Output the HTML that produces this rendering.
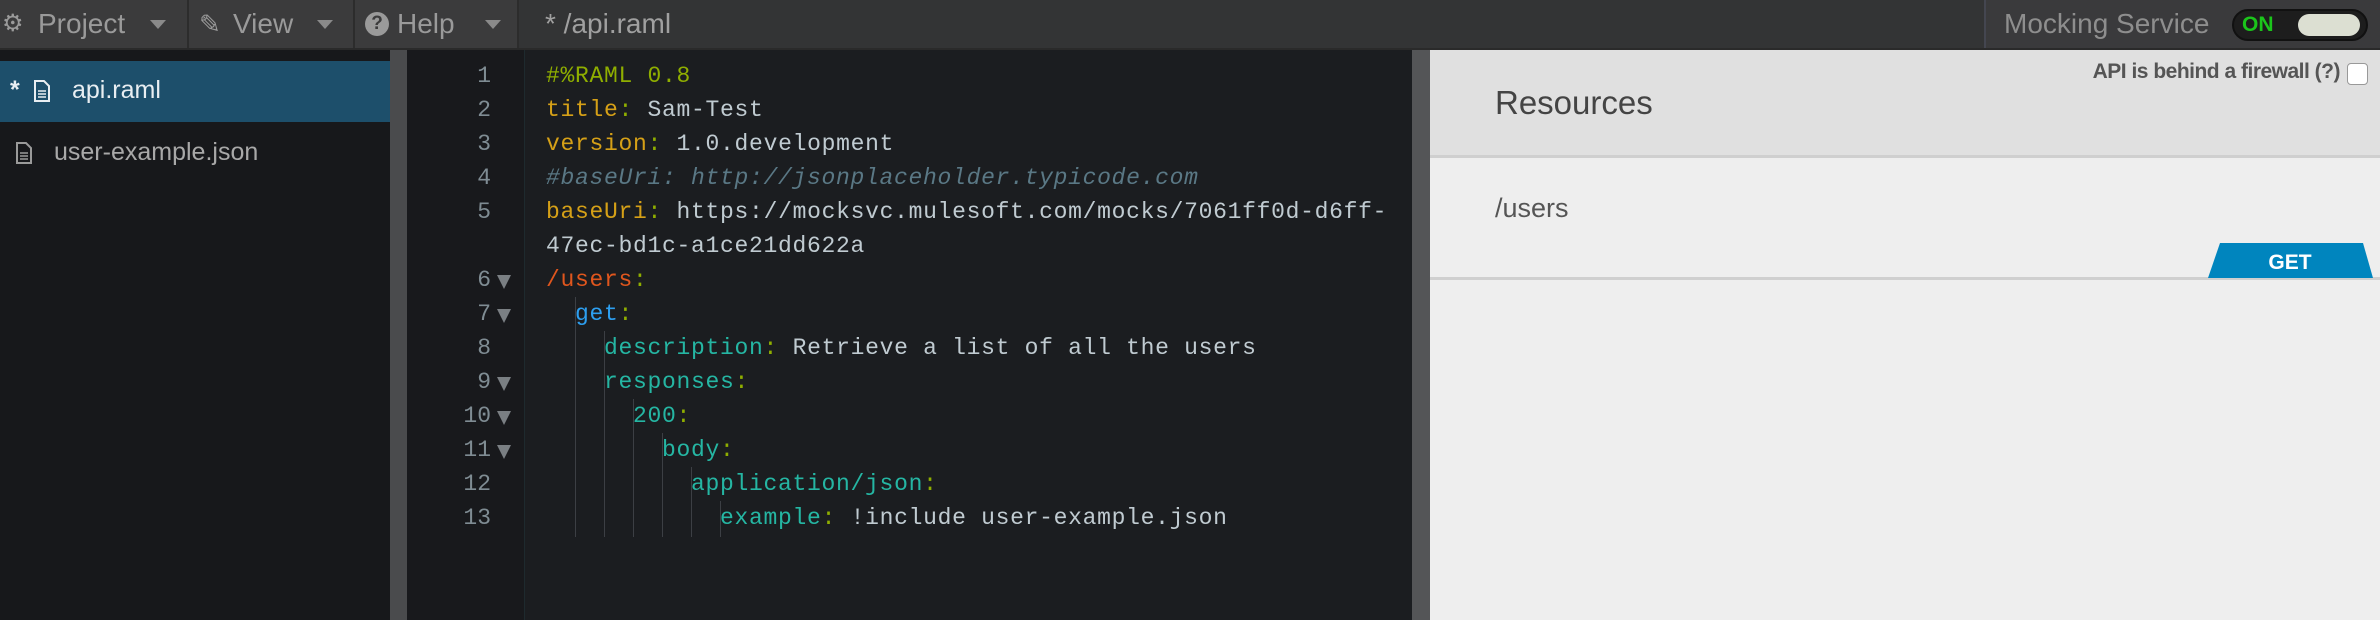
<!DOCTYPE html>
<html><head><meta charset="utf-8"><style>
*{margin:0;padding:0;box-sizing:border-box}
body{width:2380px;height:620px;overflow:hidden;background:#1b1c1f;font-family:"Liberation Sans",sans-serif;position:relative}
.top{position:absolute;left:0;top:0;width:2380px;height:50px;background:#333435;border-bottom:2px solid #2a2a2a}
.menu{position:absolute;top:0;height:48px;background:#3b3b3c;color:#9a9a9a;font-size:28px;line-height:48px;border-right:2px solid #2c2c2c}
.caret{position:absolute;top:20px;width:0;height:0;border-left:8px solid transparent;border-right:8px solid transparent;border-top:9px solid #8a8a8a}
.side{position:absolute;left:0;top:50px;width:390px;height:570px;background:#17181b}
.sel{position:absolute;left:0;top:61px;width:390px;height:61px;background:#1d4f6b}
.file{position:absolute;color:#e8eef2;font-size:25px}
.split{position:absolute;left:390px;top:50px;width:17px;height:570px;background:#4a4b4d}
.ed{position:absolute;left:407px;top:50px;width:1005px;height:570px;background:#1b1d20}
.gut{position:absolute;left:407px;top:50px;width:118px;height:570px;background:#18191c;border-right:1px solid #1e2a2e}
.ln{position:absolute;left:407px;width:84px;text-align:right;color:#7f8c93;font:23px/34px "Liberation Mono",monospace}
.fold{position:absolute;left:497px;width:0;height:0;border-left:7px solid transparent;border-right:7px solid transparent;border-top:14px solid #7a7f83}
.code{position:absolute;left:546px;font:23px/34px "Liberation Mono",monospace;letter-spacing:0.7px;color:#c0cbd1;white-space:pre}
.g{position:absolute;width:1px;background:#3c3f44}
.k{color:#d5a017}.c{color:#8fae00}.cm{color:#5a7885;font-style:italic}.u{color:#e0561d}.b{color:#2d9ff0}.t{color:#25b6a3}
.sb{position:absolute;left:1412px;top:50px;width:18px;height:570px;background:#545557}
.rp{position:absolute;left:1430px;top:50px;width:950px;height:570px;background:#eeeeee}
.hd{position:absolute;left:1430px;top:50px;width:950px;height:108px;background:#e0e0e0;border-bottom:3px solid #cfcfcf}
</style></head><body>
<div class="top"></div>
<div class="menu" style="left:0;width:189px"><span style="position:absolute;left:2px;font-size:24px">⚙</span><span style="position:absolute;left:38px">Project</span><div class="caret" style="left:150px"></div></div>
<div class="menu" style="left:189px;width:166px"><span style="position:absolute;left:10px;font-size:26px">✎</span><span style="position:absolute;left:44px">View</span><div class="caret" style="left:128px"></div></div>
<div class="menu" style="left:355px;width:164px"><span style="position:absolute;left:10px;top:12px;width:24px;height:24px;border-radius:50%;background:#9a9a9a;color:#3b3b3c;font-size:19px;line-height:24px;text-align:center;font-weight:bold">?</span><span style="position:absolute;left:42px">Help</span><div class="caret" style="left:130px"></div></div>
<div style="position:absolute;left:545px;top:0;line-height:48px;font-size:28px;color:#a0a0a0">* /api.raml</div>
<div style="position:absolute;left:1984px;top:0;width:396px;height:48px;background:#3a3a3c;border-left:2px solid #444650"></div>
<div style="position:absolute;left:2004px;top:0;line-height:48px;font-size:28px;color:#8e8e8e">Mocking Service</div>
<div style="position:absolute;left:2232px;top:9px;width:136px;height:32px;border-radius:16px;background:#1d1d1d;border:2px solid #111"></div>
<div style="position:absolute;left:2242px;top:9px;line-height:32px;font-size:21px;font-weight:bold;color:#1bc41b">ON</div>
<div style="position:absolute;left:2298px;top:14px;width:62px;height:22px;border-radius:11px;background:#dcdfd2"></div>

<div class="side"></div>
<div class="sel"></div>
<div class="file" style="left:10px;top:76px;font-weight:bold">*</div>
<svg style="position:absolute;left:34px;top:80px" width="16" height="22"><path d="M1 1h9l5 5v15H1z" fill="none" stroke="#e8eef2" stroke-width="2"/><path d="M4 11h8M4 14h8M4 17h8" stroke="#e8eef2" stroke-width="1.5"/></svg>
<div class="file" style="left:72px;top:76px">api.raml</div>
<svg style="position:absolute;left:16px;top:142px" width="16" height="22"><path d="M1 1h9l5 5v15H1z" fill="none" stroke="#9a9a9a" stroke-width="2"/><path d="M4 11h8M4 14h8M4 17h8" stroke="#9a9a9a" stroke-width="1.5"/></svg>
<div class="file" style="left:54px;top:138px;color:#a8a8a8">user-example.json</div>
<div class="split"></div>
<div class="ed"></div><div class="gut"></div>
<div class="ln" style="top:59px">1<br>2<br>3<br>4<br>5<br>&nbsp;<br>6<br>7<br>8<br>9<br>10<br>11<br>12<br>13</div>
<div class="fold" style="top:275px"></div><div class="fold" style="top:309px"></div><div class="fold" style="top:377px"></div><div class="fold" style="top:411px"></div><div class="fold" style="top:445px"></div>
<div class="g" style="left:575px;top:297px;height:240px"></div>
<div class="g" style="left:604px;top:331px;height:206px"></div>
<div class="g" style="left:633px;top:399px;height:138px"></div>
<div class="g" style="left:662px;top:433px;height:104px"></div>
<div class="g" style="left:691px;top:467px;height:70px"></div>
<div class="g" style="left:720px;top:501px;height:36px"></div>
<div class="code" style="top:59px"><span class="c">#%RAML 0.8</span>
<span class="k">title</span><span class="c">:</span> Sam-Test
<span class="k">version</span><span class="c">:</span> 1.0.development
<span class="cm">#baseUri: http://jsonplaceholder.typicode.com</span>
<span class="k">baseUri</span><span class="c">:</span> https://mocksvc.mulesoft.com/mocks/7061ff0d-d6ff-
47ec-bd1c-a1ce21dd622a
<span class="u">/users</span><span class="c">:</span>
  <span class="b">get</span><span class="c">:</span>
    <span class="t">description</span><span class="c">:</span> Retrieve a list of all the users
    <span class="t">responses</span><span class="c">:</span>
      <span class="t">200</span><span class="c">:</span>
        <span class="t">body</span><span class="c">:</span>
          <span class="t">application/json</span><span class="c">:</span>
            <span class="t">example</span><span class="c">:</span> !include user-example.json</div>
<div class="sb"></div>
<div class="rp"></div><div class="hd"></div>
<div style="position:absolute;left:2040px;top:60px;width:300px;text-align:right;font-size:21px;color:#555;font-weight:bold;letter-spacing:-0.5px">API is behind a firewall (?)</div>
<div style="position:absolute;left:2347px;top:63px;width:21px;height:22px;border:1px solid #999;border-radius:4px;background:#fff"></div>
<div style="position:absolute;left:1495px;top:84px;font-size:33px;color:#444">Resources</div>
<div style="position:absolute;left:1495px;top:193px;font-size:27px;color:#555">/users</div>
<div style="position:absolute;left:1430px;top:277px;width:950px;height:3px;background:#cfcfcf"></div>
<svg style="position:absolute;left:2208px;top:243px" width="165" height="35"><path d="M12 0H155l10 35H0z" fill="#0085be"/><text x="82" y="26" text-anchor="middle" fill="#fff" font-family="Liberation Sans" font-weight="bold" font-size="21">GET</text></svg>
</body></html>
